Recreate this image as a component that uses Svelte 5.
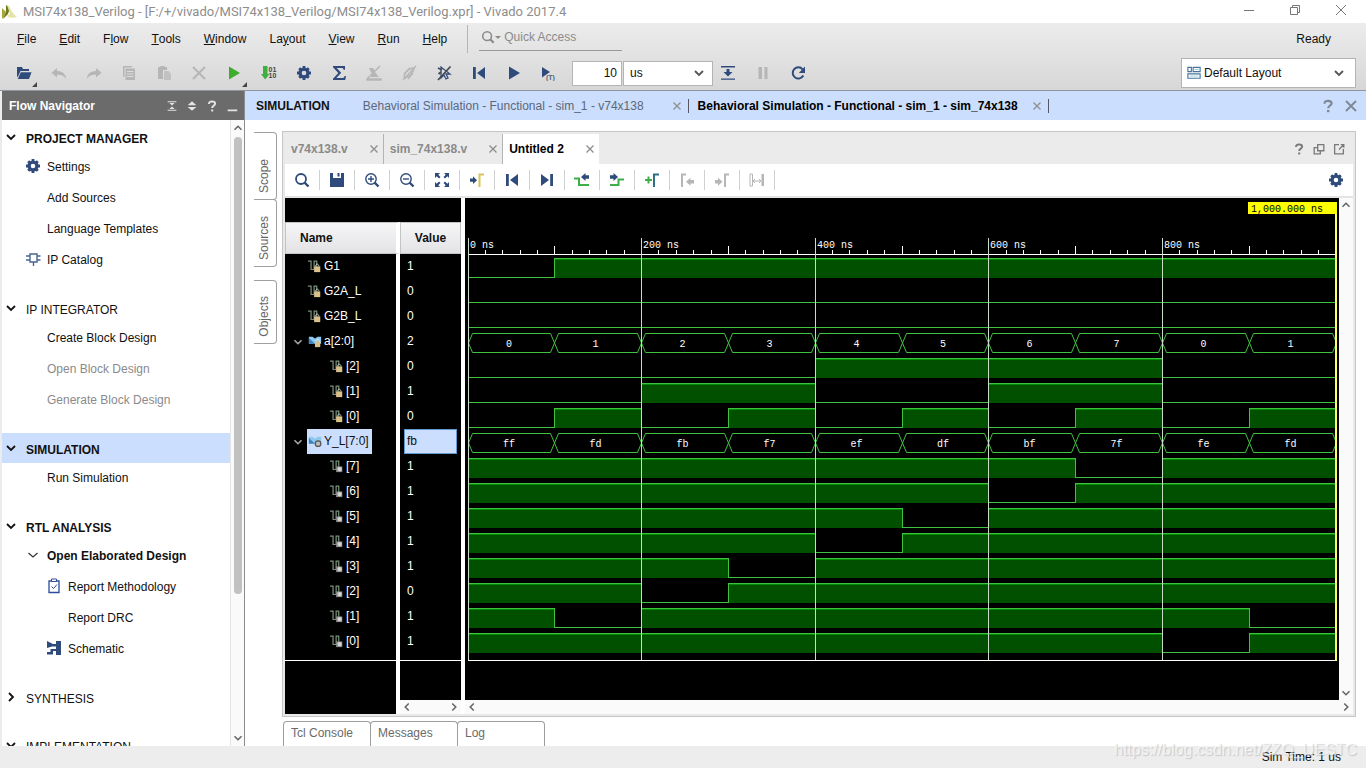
<script>
  const NAVY = '#2f4b7c';

  const icons = {
    open: '<path d="M1 2h5l1 2h6v2H4.500L2 11.500 1 12z"/><path d="M4.800 7.200H15.500L13 14H1.800z"/>',
    undo: '<path d="M6 3 .5 7.800 6 12.500V9.800c4-.4 6.500.4 9.200 4C14.600 8.600 11.500 6 6 5.900z"/>',
    redo: '<path d="m10 3 5.500 4.800L10 12.500V9.800c-4-.4-6.500.4-9.200 4C1.400 8.600 4.500 6 10 5.900z"/>',
    copy: '<path d="M2 1h9v1.500H3.500V12H2z"/><path d="M4.500 3.500H14V15H4.500zM6 6v1h6.500V6zm0 2.500v1h6.500v-1zM6 11v1h6.500v-1z" fill-rule="evenodd"/>',
    paste: '<path d="M2 2h2.500V1h4v1H11v3H7v9H2z"/><path d="M8 6h4.500L15 8.500V15H8z" opacity=".7"/>',
    cross: '<path d="m2 2 12 12M14 2 2 14" fill="none" stroke="currentColor" stroke-width="2"/>',
    play: '<path d="M3 1.500 14 8 3 14.500z"/>',
    program: '<path d="M2 1h4.500v8H8.500L4.200 14.500 0 9h2z" fill="#3cb043"/><text x="7.500" y="7" font-size="7" font-weight="bold" fill="#444">01</text><text x="7.500" y="13" font-size="7" font-weight="bold" fill="#444">10</text>',
    gear: '<circle cx="8" cy="8" r="3.900" fill="none" stroke="currentColor" stroke-width="3.200"/><path d="M8 1v14M1 8h14M3.200 3.200l9.600 9.600M12.800 3.200l-9.600 9.600" fill="none" stroke="currentColor" stroke-width="2.800" stroke-dasharray="3 8"/>',
    sigma: '<path d="M2 1h12v3.800h-1.400C12.300 3.400 11.800 3 10.400 3H5.600l4.600 4.800L5.400 13h5.800c1.400 0 1.900-.6 2.400-2H15l-.8 4H2v-1.300L7.300 8 2 2.300z"/>',
    eraseOff: '<path d="M3 3h4l2 3-3 3zM5 10l4-3 3 4 1 1H5z"/><path d="M1 14h14v1H1zM14 1 1 14" stroke="currentColor" stroke-width="1.500"/>',
    pencilOff: '<path d="M4 13c-3-3 4-10 8-10 3 2-4 9-8 10z" fill="none" stroke="currentColor" stroke-width="1.500"/><path d="M15 1 2 15M12 8l-5 6M9 3 3 9" fill="none" stroke="currentColor" stroke-width="1.500"/>',
    pointerOff: '<path d="M5 2v11l3-3 2 4 2-1-2-4h4z" fill="none" stroke="#2f4b7c" stroke-width="1.300"/><path d="M14.500 1.500 2 15M2 3l4 2M2.500 9 5 7" fill="none" stroke="currentColor" stroke-width="1.800"/>',
    first: '<path d="M2 2h2.800v12H2zM14 2v12L6 8z"/>',
    last: '<path d="M11.200 2H14v12h-2.800zM2 2v12l8-6z"/>',
    playTime: '<path d="M1 2 9 7 1 12.500z"/><text x="5" y="15" font-size="7" font-weight="bold" fill="#4e6577">(T)</text>',
    step: '<path d="M1 1h14v1.400H1zM1 13.400h14v1.400H1zM6.500 4h3v3H12.500L8 11.500 3.500 7h3z"/>',
    pause: '<path d="M3.500 2H7v12H3.500zM9.500 2H12.500v12H9.500z"/>',
    relaunch: '<path d="M12.600 4.300A5.600 5.600 0 1 0 13.300 10.500" fill="none" stroke="currentColor" stroke-width="2"/><path d="M15 1.500V8H8.800z"/>',
    search: '<circle cx="7" cy="7" r="5" fill="none" stroke="currentColor" stroke-width="1.800"/><path d="m10.500 10.500 4 4" fill="none" stroke="currentColor" stroke-width="2.400"/>',
    save: '<path d="M1 1h3v5h8V1h3v14H1zM8.500 1h2v3.500h-2z"/>',
    zoomIn: '<circle cx="7" cy="7" r="5.200" fill="none" stroke="currentColor" stroke-width="1.400"/><path d="m10.500 10.500 4 4" fill="none" stroke="currentColor" stroke-width="2.400"/><path d="M4 7h6M7 4v6" fill="none" stroke="currentColor" stroke-width="1.400"/>',
    zoomOut: '<circle cx="7" cy="7" r="5.200" fill="none" stroke="currentColor" stroke-width="1.400"/><path d="m10.500 10.500 4 4" fill="none" stroke="currentColor" stroke-width="2.400"/><path d="M4 7h6" fill="none" stroke="currentColor" stroke-width="1.400"/>',
    fit: '<path d="M1 1h5L4.300 2.700 6.500 5 5 6.500 2.700 4.300 1 6zM15 1h-5l1.700 1.700L9.500 5 11 6.500l2.300-2.200L15 6zM1 15h5l-1.700-1.700L6.500 11 5 9.500l-2.300 2.200L1 10zM15 15h-5l1.700-1.700L9.500 11 11 9.500l2.300 2.200L15 10z"/>',
    toCursor: '<path d="M1 6.500h3V4.200L8 8.200 4 12V9.800H1z"/><path d="M10.500 15V2.500H15" fill="none" stroke="#d9c35c" stroke-width="2"/>',
    prevEdge: '<path d="M15 3.300h-3.500V1L7 5l4.500 4V6.700H15z"/><path d="M0 6.500h5V13h10" fill="none" stroke="#3fae49" stroke-width="2"/>',
    nextEdge: '<path d="M1 3.300h3.500V1L9 5 4.500 9V6.700H1z"/><path d="M1 13h8.500V7.500H15" fill="none" stroke="#3fae49" stroke-width="2"/>',
    addMarker: '<path d="M1 8h7M4.500 4.500v7" fill="none" stroke="#3fae49" stroke-width="2"/><path d="M10 15V2.500h5" fill="none" stroke="#2f6f86" stroke-width="2"/>',
    prevMarker: '<path d="M3 15V2.500h4" fill="none" stroke="currentColor" stroke-width="2"/><path d="M15 8h-3.500V5.800L7 9.800l4.500 4v-2.300H15z"/>',
    nextMarker: '<path d="M11 15V2.500h4" fill="none" stroke="currentColor" stroke-width="2"/><path d="M1 8h3V5.800l4.500 4-4.500 4v-2.300H1z"/>',
    swap: '<path d="M1 2h2.500v12H1zM4 9h8M6 7 4 9l2 2M10 7l2 2-2 2" fill="none" stroke="currentColor"/><path d="M12.500 2H15v12h-2.500z"/>',
    ipCatalog: '<path d="M5 3h7v8H5zM1 5h4M1 9h4M12 5h3.500M12 9h3.500M8.500 11v4" fill="none" stroke="#4a6590" stroke-width="1.400"/>',
    report: '<path d="M3 3h10v11.500H3z" fill="none" stroke="#2f4b9c" stroke-width="1.300"/><path d="M5.500 1h5v2.500h-5z" fill="#fff" stroke="#2f4b9c"/><path d="m5.500 8.500 2 2 3.500-4" fill="none" stroke="#2f4b9c"/>',
    schematic: '<path d="M1 1l6 3h3V1h5v14h-5v-4H7v3.500H1V12h3.500V9H10V6.500H6L1 8z"/>',
    layout: '<path d="M1 1.500h4v5H1zM7 1.500h8v5H7zM1 9h14v5H1z" fill="none" stroke="#48749c" stroke-width="1.300"/><path d="M8.500 4h5M3 11.500h10" stroke="#8fd0dc"/>',
    down: '<path d="m4 6 4 4 4-4" fill="none" stroke="currentColor" stroke-width="1.800"/>',
    up: '<path d="m4 10 4-4 4 4" fill="none" stroke="currentColor" stroke-width="1.800"/>',
    right: '<path d="m6 4 4 4-4 4" fill="none" stroke="currentColor" stroke-width="1.800"/>',
    left: '<path d="M10 4 6 8l4 4" fill="none" stroke="currentColor" stroke-width="1.800"/>',
    thin: '<path d="m3.500 6 4.500 4 4.500-4" fill="none" stroke="currentColor" stroke-width="1.200"/>',
    close: '<path d="m4 4 8 8M12 4l-8 8" fill="none" stroke="currentColor" stroke-width="1.500"/>',
    help: '<path d="M4.500 5.800C4.500 3.600 6 2.800 8 2.800s3.600.9 3.600 2.700c0 2.200-3.400 2-3.400 4.700" fill="none" stroke="currentColor" stroke-width="2.200"/><path d="M7 12h2.400v2.200H7z"/>',
    collapse: '<path d="M3 2.500h10v1.300H3zM3 12.200h10v1.300H3zM5 4.500h6L8 7.300zM5 11.500h6L8 8.700z"/>',
    expand: '<path d="M8 2.500 13 7H3zM8 13.500 13 9H3z"/>',
    minimize: '<path d="M3 12h11v2H3z"/>',
    float: '<path d="M6.500 3h7v7h-7zM6.500 6.500h-4v7h7V10" fill="none" stroke="currentColor" stroke-width="1.500"/>',
    maximize: '<path d="M8 3H3v10.500h10V8M13 3.500 8 8.500M10 3h3.500v3.500" fill="none" stroke="currentColor" stroke-width="1.500"/>',
    signalIn: '<path d="M0 2.500h3.500V12H7V2.500h3V9" fill="none" stroke="#78907a" stroke-width="1.400"/><path d="M7 8.500h7V15H7z" fill="#dcc08a"/><path d="M8.500 8.500c0-3.500 4-3.500 4 0" fill="none" stroke="#d8d8d8"/>',
    signalOut: '<path d="M0 2.500h3.500V12H7V2.500h3V9" fill="none" stroke="#78907a" stroke-width="1.400"/><path d="M7 8.500h7V15H7z" fill="#8d8d8d"/><circle cx="11" cy="11.500" r="2.500" fill="#d4d4d4"/>',
    busIn: '<path d="M1 3h4l3 2 3-2h4v8H1z" fill="#8ec8ee"/><path d="M1 4.500 8 11H1z" fill="#3b82c0"/><path d="M8 8.500h6V15H8z" fill="#dcc08a"/><path d="M9 8.500c0-3 4-3 4 0" fill="none" stroke="#eee"/>',
    busOut: '<path d="M1 3h4l3 2 3-2h4v8H1z" fill="#8ec8ee"/><path d="M1 4.500 8 11H1z" fill="#3b82c0"/><circle cx="11.500" cy="11" r="3.200" fill="#bbb" stroke="#555" stroke-width="1.400"/>'
  };

  const menus = [
    ['', 'F', 'ile'], ['', 'E', 'dit'], ['F', 'l', 'ow'], ['', 'T', 'ools'], ['', 'W', 'indow'],
    ['La', 'y', 'out'], ['', 'V', 'iew'], ['', 'R', 'un'], ['', 'H', 'elp']
  ];

  const tools = [
    { icon: 'open', label: 'Open', color: NAVY, more: true },
    { icon: 'undo', label: 'Undo', disabled: true },
    { icon: 'redo', label: 'Redo', disabled: true },
    { icon: 'copy', label: 'Copy', disabled: true },
    { icon: 'paste', label: 'Paste', disabled: true },
    { icon: 'cross', label: 'Delete', disabled: true },
    { icon: 'play', label: 'Run flow', color: '#3cae2c', more: true },
    { icon: 'program', label: 'Generate bitstream', color: NAVY },
    { icon: 'gear', label: 'Settings', color: NAVY },
    { icon: 'sigma', label: 'Report', color: NAVY },
    { icon: 'eraseOff', label: 'Clear', disabled: true },
    { icon: 'pencilOff', label: 'Edit', disabled: true },
    { icon: 'pointerOff', label: 'Unselect', color: '#444c58' },
    { icon: 'first', label: 'Restart', color: NAVY },
    { icon: 'play', label: 'Run all', color: NAVY },
    { icon: 'playTime', label: 'Run for time', color: NAVY }
  ];
  const runTools = [
    { icon: 'step', label: 'Step', color: NAVY },
    { icon: 'pause', label: 'Break', disabled: true },
    { icon: 'relaunch', label: 'Relaunch', color: NAVY }
  ];

  const groups = [
    {
      title: 'PROJECT MANAGER', bold: true, open: true,
      items: [
        { text: 'Settings', icon: 'gear' },
        { text: 'Add Sources' },
        { text: 'Language Templates' },
        { text: 'IP Catalog', icon: 'ipCatalog' }
      ]
    },
    {
      title: 'IP INTEGRATOR', open: true,
      items: [
        { text: 'Create Block Design' },
        { text: 'Open Block Design', disabled: true },
        { text: 'Generate Block Design', disabled: true }
      ]
    },
    { title: 'SIMULATION', bold: true, open: true, active: true, items: [{ text: 'Run Simulation' }] },
    {
      title: 'RTL ANALYSIS', bold: true, open: true,
      items: [
        { text: 'Open Elaborated Design', icon: 'thin', bold: true },
        { text: 'Report Methodology', icon: 'report', nested: true },
        { text: 'Report DRC', nested: true },
        { text: 'Schematic', icon: 'schematic', nested: true }
      ]
    },
    { title: 'SYNTHESIS', items: [] },
    { title: 'IMPLEMENTATION', open: true, items: [] }
  ];

  const simTabs = [
    { text: 'Behavioral Simulation - Functional - sim_1 - v74x138' },
    { text: 'Behavioral Simulation - Functional - sim_1 - sim_74x138', active: true }
  ];
  const fileTabs = [{ text: 'v74x138.v' }, { text: 'sim_74x138.v' }, { text: 'Untitled 2', active: true }];

  const waveTools = [
    { icon: 'search', label: 'Find' },
    { icon: 'save', label: 'Save waveform' },
    { icon: 'zoomIn', label: 'Zoom in' },
    { icon: 'zoomOut', label: 'Zoom out' },
    { icon: 'fit', label: 'Zoom fit' },
    { icon: 'toCursor', label: 'Go to cursor' },
    { icon: 'first', label: 'Go to time 0' },
    { icon: 'last', label: 'Go to last time' },
    { icon: 'prevEdge', label: 'Previous transition' },
    { icon: 'nextEdge', label: 'Next transition' },
    { icon: 'addMarker', label: 'Add marker' },
    { icon: 'prevMarker', label: 'Previous marker', disabled: true },
    { icon: 'nextMarker', label: 'Next marker', disabled: true },
    { icon: 'swap', label: 'Swap cursors', disabled: true }
  ];

  // one sample per 100 ns
  const a = [0, 1, 2, 3, 4, 5, 6, 7, 0, 1];
  const y = [0xff, 0xfd, 0xfb, 0xf7, 0xef, 0xdf, 0xbf, 0x7f, 0xfe, 0xfd];
  const bits = (bus, n) => bus.map(v => (v >> n) & 1);

  const signals = [
    { name: 'G1', value: '1', icon: 'signalIn', wave: [0, 1, 1, 1, 1, 1, 1, 1, 1, 1] },
    { name: 'G2A_L', value: '0', icon: 'signalIn', wave: Array(10).fill(0) },
    { name: 'G2B_L', value: '0', icon: 'signalIn', wave: Array(10).fill(0) },
    { name: 'a[2:0]', value: '2', icon: 'busIn', bus: a },
    ...[2, 1, 0].map(n => ({
      name: `[${n}]`, value: String((2 >> n) & 1), icon: 'signalIn', child: true, wave: bits(a, n)
    })),
    { name: 'Y_L[7:0]', value: 'fb', icon: 'busOut', bus: y, selected: true },
    ...[7, 6, 5, 4, 3, 2, 1, 0].map(n => ({
      name: `[${n}]`, value: String((0xfb >> n) & 1), icon: 'signalOut', child: true, wave: bits(y, n)
    }))
  ];

  const RULER = 56;
  const ROW = 25;
  const waveBottom = RULER + ROW * signals.length + 6;

  let waveWidth = $state(874);
  const x = $derived(t => 3 + Math.floor((t * (waveWidth - 6)) / 1000));

  const ticks = Array.from({ length: 50 }, (_, i) => i * 20);
  const majors = [0, 200, 400, 600, 800];

  function line(wave, top) {
    const level = v => top + (v ? 4 : 23) + 0.5;
    let d = `M${x(0)} ${level(wave[0])}`;
    wave.forEach((v, i) => {
      if (i > 0 && wave[i - 1] !== v) d += `V${level(v)}`;
      d += `H${x((i + 1) * 100) + 0.5}`;
    });
    return d;
  }

  function hexagon(i, top) {
    const l = x(i * 100) + 0.5;
    const r = x((i + 1) * 100) + 0.5;
    const t = top + 4.5;
    const b = top + 23.5;
    const m = (t + b) / 2;
    return `${l},${m} ${l + 4},${t} ${r - 4},${t} ${r},${m} ${r - 4},${b} ${l + 4},${b}`;
  }

  let runTime = $state('10');
</script>

{#snippet icon(name, size = 16)}
  <svg width={size} height={size} viewBox="0 0 16 16" fill="currentColor" aria-hidden="true">{@html icons[name]}</svg>
{/snippet}

<div class="app">
  <header class="title-bar">
    <svg class="logo" width="16" height="18" viewBox="0 0 16 18" aria-hidden="true">
      <path d="M0 5 4 9 2 14 0 16z" fill="#a9a53a" />
      <path d="M4 2 8 5 6 11 1 16 4 9z" fill="#6f7a1c" />
      <path d="M5 2c4 1 3 7 10 12-5 1-8 1-10-1l3-2z" fill="#e3e3a4" />
    </svg>
    <h1>MSI74x138_Verilog - [F:/+/vivado/MSI74x138_Verilog/MSI74x138_Verilog.xpr] - Vivado 2017.4</h1>
    <div class="window-buttons">
      <button aria-label="Minimize"><svg width="12" height="12"><path d="M1 6.500h10" /></svg></button>
      <button aria-label="Restore"><svg width="12" height="12"><path d="M1.500 3.500h7v7h-7zM3.500 3V1.500h7v7H9" /></svg></button>
      <button aria-label="Close"><svg width="12" height="12"><path d="m1 1 10 10M11 1 1 11" /></svg></button>
    </div>
  </header>

  <div class="chrome">
    <div class="menu-bar">
      <nav>
        {#each menus as [before, key, after]}
          <button>{before}<u>{key}</u>{after}</button>
        {/each}
      </nav>
      <label class="quick-access">
        <span class="quick-icon">{@render icon('search', 14)}<i></i></span>
        <input type="text" placeholder="Quick Access" aria-label="Quick Access" />
      </label>
      <span class="ready">Ready</span>
    </div>

    <div class="tool-bar">
      {#each tools as tool}
        <button class="tool" style:color={tool.color} disabled={tool.disabled} aria-label={tool.label}>
          {@render icon(tool.icon)}
          {#if tool.more}<i class="more"></i>{/if}
        </button>
      {/each}
      <input class="run-time" type="text" bind:value={runTime} aria-label="Run time" />
      <div class="select unit">
        <select aria-label="Time unit"><option>us</option><option>ns</option></select>
        {@render icon('down')}
      </div>
      {#each runTools as tool}
        <button class="tool" style:color={tool.color} disabled={tool.disabled} aria-label={tool.label}>
          {@render icon(tool.icon)}
        </button>
      {/each}
      <div class="select layout">
        <span class="select-icon">{@render icon('layout', 14)}</span>
        <select aria-label="Layout"><option>Default Layout</option></select>
        {@render icon('down')}
      </div>
    </div>
  </div>

  <div class="body">
    <aside class="navigator">
      <div class="nav-header">
        <h2>Flow Navigator</h2>
        <button aria-label="Collapse all">{@render icon('collapse', 14)}</button>
        <button aria-label="Expand all">{@render icon('expand', 14)}</button>
        <button aria-label="Help">{@render icon('help', 14)}</button>
        <button aria-label="Minimize">{@render icon('minimize', 14)}</button>
      </div>
      <div class="nav-body">
        <div class="nav-list">
          {#each groups as group}
            <section class:collapsed={!group.items.length}>
              <button class="group" class:bold={group.bold} class:active={group.active}>
                {@render icon(group.open ? 'down' : 'right')}
                <span>{group.title}</span>
              </button>
              {#if group.items.length}
                <ul>
                  {#each group.items as item}
                    <li>
                      <button class="item" class:bold={item.bold} class:nested={item.nested} disabled={item.disabled}>
                        <span class="item-icon" class:thin={item.icon === 'thin'}>
                          {#if item.icon}{@render icon(item.icon)}{/if}
                        </span>
                        <span class="item-text">{item.text}</span>
                      </button>
                    </li>
                  {/each}
                </ul>
              {/if}
            </section>
          {/each}
        </div>
        <div class="scroll vertical">
          {@render icon('up', 14)}
          <div class="track"><div class="thumb"></div></div>
          {@render icon('down', 14)}
        </div>
      </div>
    </aside>

    <main>
      <div class="sim-bar">
        <h2>SIMULATION</h2>
        {#each simTabs as tab}
          <div class="sim-tab" class:active={tab.active}>
            <button>{tab.text}</button>
            <button class="close" aria-label="Close tab">{@render icon('close', 14)}</button>
          </div>
        {/each}
        <div class="sim-actions">
          <button aria-label="Help">{@render icon('help')}</button>
          <button aria-label="Close simulation">{@render icon('close', 20)}</button>
        </div>
      </div>

      <div class="workspace">
        <div class="side-tabs">
          <button class="scope"><span>Scope</span></button>
          <button class="sources"><span>Sources</span></button>
          <button class="objects"><span>Objects</span></button>
        </div>

        <div class="center">
          <div class="panel">
            <div class="file-tabs">
              {#each fileTabs as tab}
                <div class="file-tab" class:active={tab.active}>
                  <button>{tab.text}</button>
                  <button class="close" aria-label="Close file">{@render icon('close', 14)}</button>
                </div>
              {/each}
              <div class="panel-actions">
                <button aria-label="Help">{@render icon('help', 14)}</button>
                <button aria-label="Float">{@render icon('float', 14)}</button>
                <button aria-label="Maximize">{@render icon('maximize', 14)}</button>
              </div>
            </div>

            <div class="wave-tools">
              {#each waveTools as tool}
                <button disabled={tool.disabled} aria-label={tool.label}>{@render icon(tool.icon)}</button>
              {/each}
              <button class="wave-settings" aria-label="Waveform settings">{@render icon('gear')}</button>
            </div>

            <div class="wave">
              <div class="signals">
                <table>
                  <thead>
                    <tr><th class="name">Name</th><th class="value">Value</th></tr>
                  </thead>
                  <tbody>
                    {#each signals as signal}
                      <tr class:selected={signal.selected}>
                        <td>
                          <div class="cell" class:child={signal.child}>
                            <span class="twisty">{#if signal.bus}{@render icon('down', 14)}{/if}</span>
                            <span class="label">{@render icon(signal.icon, 14)}{signal.name}</span>
                          </div>
                        </td>
                        <td><div class="val">{signal.value}</div></td>
                      </tr>
                    {/each}
                  </tbody>
                </table>
                <div class="filler">
                  <div class="name-fill"><div class="end"></div></div>
                  <div class="value-fill">
                    <div class="end"></div>
                    <div class="scroll horizontal">{@render icon('left', 14)}{@render icon('right', 14)}</div>
                  </div>
                </div>
              </div>

              <div class="plot">
                <div class="canvas" bind:clientWidth={waveWidth}>
                  <svg width={waveWidth} height={waveBottom + 1} role="img" aria-label="Waveforms">
                    {#each signals as signal, i}
                      {@const top = RULER + i * ROW}
                      {#if signal.bus}
                        {#each signal.bus as v, n}
                          <polygon class="bus" points={hexagon(n, top)} />
                          <text class="bus-text" x={(x(n * 100) + x(n * 100 + 100)) / 2 - 2} y={top + 18}>{v.toString(16)}</text>
                        {/each}
                      {:else}
                        {#each signal.wave as v, n}
                          {#if v}
                            <rect class="high" x={x(n * 100)} y={top + 4} width={x(n * 100 + 100) - x(n * 100)} height="20" />
                            <rect class="glow" x={x(n * 100)} y={top + 5} width={x(n * 100 + 100) - x(n * 100)} height="1" />
                          {/if}
                        {/each}
                        <path class="line" d={line(signal.wave, top)} />
                      {/if}
                    {/each}

                    {#each ticks as t}
                      <rect class="tick" x={x(t)} y={t % 100 ? RULER - 4 : RULER - 8} width="1" height={t % 100 ? 4 : 8} />
                    {/each}
                    <rect class="tick" x={x(0)} y={RULER} width={x(1000) - x(0)} height="1" />
                    <rect class="tick" x={x(0)} y={waveBottom} width={x(1000) - x(0)} height="1" />
                    {#each majors as t}
                      <rect class="grid" x={x(t)} y={RULER - 16} width="1" height={waveBottom - RULER + 16} />
                      <text class="ruler-text" x={x(t) + 2} y={RULER - 6}>{t} ns</text>
                    {/each}

                    <rect class="cursor" x={x(1000) - 1} y="4" width="2" height={waveBottom - 3} />
                    <rect class="cursor-label" x={x(1000) - 88} y="4" width="89" height="12" />
                    <text class="cursor-text" x={x(1000) - 85} y="14">1,000.000 ns</text>
                  </svg>
                </div>
                <div class="scroll vertical">{@render icon('up', 14)}{@render icon('down', 14)}</div>
                <div class="scroll horizontal">{@render icon('left', 14)}{@render icon('right', 14)}</div>
              </div>
            </div>
          </div>

          <div class="bottom-tabs">
            <button>Tcl Console</button>
            <button>Messages</button>
            <button>Log</button>
          </div>
        </div>
      </div>
    </main>
  </div>

  <footer>
    <span>Sim Time: 1 us</span>
    <span class="watermark">https://blog.csdn.net/ZZQ_UESTC</span>
  </footer>
</div>

<style>
  :global(body) {
    overflow: hidden;
  }
  .app {
    display: flex;
    flex-direction: column;
    height: 100vh;
    background: #fff;
    color: #111;
    font-family: 'Liberation Sans', Arial, sans-serif;
    font-size: 12px;
    line-height: 16px;
  }
  .app * {
    box-sizing: border-box;
  }
  button,
  input,
  select {
    margin: 0;
    padding: 0;
    border: 0;
    background: none;
    color: inherit;
    font: inherit;
  }
  button {
    display: flex;
    align-items: center;
    white-space: nowrap;
  }
  svg {
    flex: none;
    display: block;
  }
  h1,
  h2 {
    margin: 0;
    font-size: 12px;
    white-space: nowrap;
  }
  ul {
    margin: 0;
    padding: 0;
    list-style: none;
  }

  .title-bar {
    display: flex;
    align-items: center;
    flex: none;
    height: 23px;
    padding-left: 2px;
    color: #8d8d8d;
  }
  .title-bar h1 {
    margin-left: 5px;
    font-family: Roboto, 'Noto Sans', sans-serif;
    font-size: 13px;
    font-weight: normal;
  }
  .window-buttons {
    display: flex;
    gap: 34px;
    margin-left: auto;
    padding: 0 19px 4px 0;
  }
  .window-buttons path {
    fill: none;
    stroke: #777;
  }

  .chrome {
    flex: none;
    height: 68px;
    border-bottom: 1px solid #8f959e;
    background: linear-gradient(#ececec, #d7d7d7);
  }
  .menu-bar {
    display: flex;
    align-items: center;
    height: 32px;
    padding: 0 35px 0 17px;
  }
  .menu-bar nav {
    display: flex;
    gap: 23px;
    padding-right: 20px;
  }
  .quick-access {
    display: flex;
    align-items: center;
    height: 28px;
    padding: 0 0 3px 11px;
    border-left: 1px solid #b5b5b5;
    color: #8b8b8b;
  }
  .quick-icon {
    display: flex;
    align-items: center;
    height: 26px;
    padding: 0 3px 0 2px;
    border-bottom: 1px solid #999;
  }
  .quick-icon i {
    border: 3px solid transparent;
    border-top-color: #8b8b8b;
    border-bottom: 0;
  }
  .quick-access input {
    width: 118px;
    height: 26px;
    border-bottom: 1px solid #999;
    outline: 0;
  }
  .quick-access input::placeholder {
    color: #8b8b8b;
    opacity: 1;
  }
  .ready {
    margin-left: auto;
  }

  .tool-bar {
    display: flex;
    align-items: center;
    height: 36px;
    padding: 0 10px 0 6px;
  }
  .tool {
    position: relative;
    justify-content: center;
    width: 35px;
    height: 28px;
  }
  .tool:disabled {
    color: #b6b6b6;
  }
  .more {
    position: absolute;
    right: 4px;
    bottom: 0;
    border-left: 5px solid transparent;
    border-bottom: 5px solid #444;
  }
  .run-time {
    width: 50px;
    height: 25px;
    margin-left: 6px;
    padding-right: 4px;
    border: 1px solid #b4b4b4;
    background: #fff;
    text-align: right;
  }
  .select {
    display: flex;
    align-items: center;
    border: 1px solid #b4b4b4;
    background: #fff;
    color: #555;
  }
  .select select {
    flex: 1;
    height: 100%;
    min-width: 0;
    appearance: none;
    color: #111;
    outline: 0;
  }
  .unit {
    width: 90px;
    height: 25px;
    margin: 0 -3px 0 1px;
    padding: 0 5px 0 6px;
  }
  .layout {
    width: 175px;
    height: 30px;
    margin-left: auto;
    padding: 0 8px 0 5px;
  }
  .select-icon {
    margin-right: 3px;
  }

  .body {
    display: flex;
    flex: 1;
    min-height: 0;
    border-left: 2px solid #ececec;
  }
  .navigator {
    display: flex;
    flex-direction: column;
    flex: none;
    width: 243px;
    border-right: 1px solid #8c8c8c;
  }
  .nav-header {
    display: flex;
    align-items: center;
    gap: 6px;
    height: 29px;
    padding: 0 5px 0 7px;
    background: #6b6b6b;
    color: #e4e4e4;
  }
  .nav-header h2 {
    flex: 1;
    color: #fff;
  }
  .nav-body {
    display: flex;
    flex: 1;
    min-height: 0;
  }
  .nav-body .vertical {
    width: 15px;
    padding: 1px 0;
    border-left: 1px solid #e6e6e6;
  }
  .nav-list {
    flex: 1;
    overflow: hidden;
    padding-top: 2px;
  }
  section {
    margin-bottom: 20px;
  }
  section.collapsed {
    margin-bottom: 18px;
  }
  .group {
    width: 100%;
    height: 30px;
    gap: 7px;
    padding: 0 0 0 1px;
  }
  .group span {
    padding-top: 3px;
  }
  .group.active {
    background: #cbdefd;
  }
  .bold {
    font-weight: bold;
  }
  .item {
    height: 28px;
    padding-left: 23px;
  }
  .item:disabled {
    color: #8a8a8a;
  }
  li + li {
    margin-top: 3px;
  }
  .item.nested {
    padding-left: 44px;
  }
  .item-icon {
    width: 16px;
    margin-right: 6px;
    color: #2f4b7c;
  }
  .item-icon.thin {
    color: #333;
  }
  .item-text {
    padding-top: 2px;
  }

  .scroll {
    display: flex;
    align-items: center;
    justify-content: space-between;
    background: #fafafa;
    color: #666;
  }
  .scroll.vertical {
    flex-direction: column;
    width: 14px;
  }
  .scroll.horizontal {
    height: 14px;
  }
  .track {
    flex: 1;
    width: 8px;
    padding-top: 2px;
  }
  .thumb {
    height: 77%;
    border-radius: 4px;
    background: #c1c1c1;
  }

  main {
    display: flex;
    flex-direction: column;
    flex: 1;
    min-width: 0;
  }
  .sim-bar {
    display: flex;
    align-items: center;
    flex: none;
    height: 29px;
    padding: 0 5px 0 11px;
    background: #cbdefd;
  }
  .sim-bar h2 {
    margin-right: 24px;
    color: #111;
  }
  .sim-tab {
    display: flex;
    align-items: center;
    gap: 26px;
    height: 14px;
    padding: 0 4px 0 9px;
    border-right: 1px solid #556;
    color: #5d6878;
  }
  .sim-tab.active {
    gap: 12px;
    color: #000;
    font-weight: bold;
  }
  .close {
    color: #8d8d8d;
  }
  .sim-actions {
    display: flex;
    align-items: center;
    gap: 5px;
    margin-left: auto;
    color: #7f8896;
  }
  .workspace {
    display: flex;
    flex: 1;
    min-height: 0;
    padding: 11px 10px 0 9px;
  }
  .side-tabs {
    display: flex;
    flex-direction: column;
    width: 28px;
    padding: 1px 5px 0 0;
    color: #666;
  }
  .side-tabs button {
    align-items: flex-end;
    justify-content: center;
    padding: 0 3px 6px 0;
    border: 1px solid #a0a0a0;
    border-left: 0;
    border-radius: 0 4px 4px 0;
  }
  .side-tabs span {
    writing-mode: vertical-rl;
    transform: rotate(180deg);
  }
  .scope,
  .sources {
    height: 68px;
  }
  .side-tabs .sources {
    margin-top: -1px;
  }
  .side-tabs .objects {
    height: 64px;
    margin-top: 13px;
  }
  .center {
    display: flex;
    flex-direction: column;
    flex: 1;
    min-width: 0;
  }
  .panel {
    display: flex;
    flex-direction: column;
    flex: 1;
    min-height: 0;
    border: 1px solid #c6c6c6;
    outline: 2px solid #e9e9e9;
    outline-offset: -3px;
    padding: 2px;
  }
  .file-tabs {
    display: flex;
    flex: none;
    height: 30px;
    background: #ebebeb;
  }
  .file-tab {
    display: flex;
    align-items: center;
    gap: 19px;
    padding: 0 2px 0 6px;
    border-right: 1px solid #b4b4b4;
    color: #8a8a8a;
    font-weight: bold;
  }
  .file-tab.active {
    border-right: 0;
    background: #fff;
    color: #000;
  }
  .panel-actions {
    display: flex;
    align-items: center;
    gap: 6px;
    margin-left: auto;
    padding-right: 7px;
    color: #7a7a7a;
  }
  .wave-tools {
    display: flex;
    align-items: center;
    flex: none;
    height: 34px;
    border-bottom: 2px solid #e4e4e4;
    color: #2f4b7c;
  }
  .wave-tools button {
    justify-content: center;
    width: 35px;
    height: 20px;
    border-right: 1px solid #d0d0d0;
  }
  .wave-tools button:disabled {
    color: #b6b6b6;
  }
  .wave-tools .wave-settings {
    margin-left: auto;
    border: 0;
  }

  .wave {
    display: flex;
    flex: 1;
    min-height: 0;
  }
  .signals {
    display: flex;
    flex-direction: column;
    width: 180px;
    padding-top: 24px;
    border-right: 4px solid #fff;
    background: #000;
    color: #fff;
  }
  table {
    width: 176px;
    border-spacing: 0;
    table-layout: fixed;
  }
  th,
  td {
    padding: 0;
  }
  th {
    height: 32px;
    border: 1px solid #c4c4c4;
    background: linear-gradient(#f6f6f7, #e3e3e6);
    color: #111;
  }
  .name {
    width: 115px;
    padding-left: 14px;
    border-right: 4px solid #fff;
    text-align: left;
  }
  td {
    height: 25px;
  }
  td:first-child {
    border-right: 4px solid #fff;
  }
  .cell {
    display: flex;
    height: 25px;
    padding-left: 6px;
  }
  .cell.child {
    padding-left: 28px;
  }
  .twisty {
    display: flex;
    align-items: center;
    width: 16px;
    color: #aaa;
  }
  .label {
    display: flex;
    align-items: center;
    gap: 2px;
    padding: 0 3px 2px 1px;
  }
  .val {
    height: 25px;
    margin: 0 4px;
    padding: 4px 3px;
  }
  .selected .label {
    background: #cbdefd;
    color: #111;
  }
  .selected .val {
    padding: 3px 2px;
    border: 1px solid #5f9ad0;
    background: #cbdefd;
    color: #111;
  }
  .filler {
    display: flex;
    flex: 1;
  }
  .end {
    height: 7px;
    border-bottom: 1px solid #fff;
  }
  .name-fill {
    width: 115px;
    border-right: 4px solid #fff;
  }
  .value-fill {
    display: flex;
    flex-direction: column;
    justify-content: space-between;
    flex: 1;
  }
  .plot {
    display: grid;
    grid-template: minmax(0, 1fr) 14px / minmax(0, 1fr) 14px;
    flex: 1;
    min-width: 0;
  }
  .canvas {
    overflow: hidden;
    background: #000;
  }
  .plot .horizontal {
    grid-column: 1 / 3;
  }
  .bus,
  .line {
    fill: none;
    stroke: #3fc23f;
  }
  .line {
    shape-rendering: crispEdges;
  }
  .high {
    fill: #005000;
  }
  .glow {
    fill: #008a00;
  }
  .tick {
    fill: #fff;
  }
  .grid {
    fill: #c8dcc8;
  }
  .cursor-label {
    fill: #ff0;
  }
  .cursor {
    fill: #ffff60;
  }
  .bus-text,
  .ruler-text,
  .cursor-text {
    fill: #fff;
    font-family: 'Liberation Mono', monospace;
    font-size: 10px;
  }
  .bus-text {
    text-anchor: middle;
  }
  .cursor-text {
    fill: #000;
  }

  .bottom-tabs {
    display: flex;
    flex: none;
    padding: 4px 0 0 1px;
    color: #6a6a6a;
  }
  .bottom-tabs button {
    width: 88px;
    height: 25px;
    padding: 0 0 2px 7px;
    border: 1px solid #9e9e9e;
    border-bottom: 0;
    border-radius: 4px 4px 0 0;
  }
  .bottom-tabs button + button {
    margin-left: -1px;
  }
  footer {
    position: relative;
    display: flex;
    align-items: center;
    justify-content: flex-end;
    flex: none;
    height: 22px;
    padding-right: 25px;
    background: #ededed;
  }
  .watermark {
    position: absolute;
    right: 9px;
    bottom: 9px;
    color: rgba(255, 255, 255, 0.6);
    font-size: 16px;
    line-height: 18px;
    text-shadow: 1px 1px 1px rgba(140, 140, 140, 0.4);
  }
</style>
